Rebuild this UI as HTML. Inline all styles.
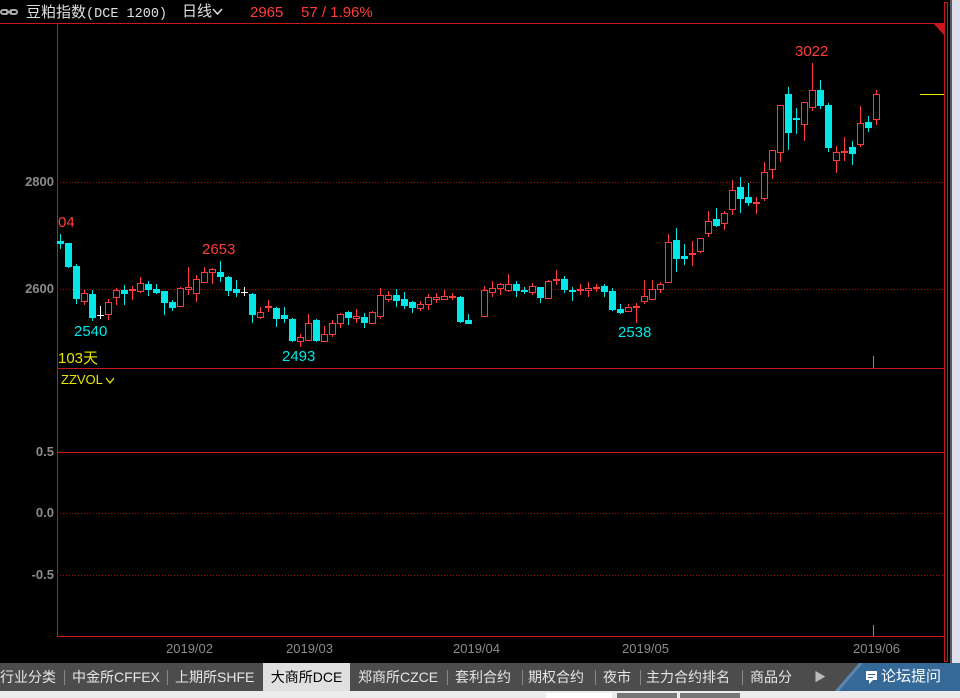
<!DOCTYPE html>
<html><head><meta charset="utf-8"><style>
*{margin:0;padding:0}
body{width:960px;height:698px;background:#000;overflow:hidden;position:relative;font-family:"Liberation Sans","Noto Sans CJK SC",sans-serif}
.t{position:absolute;white-space:nowrap}
.tabs{position:absolute;left:0;top:663px;width:960px;height:28px;background:#4c4c4c}
.tab{position:absolute;top:0;height:28px;line-height:28px;color:#e6e6e6;font-size:14px;font-family:"Liberation Sans","Noto Sans CJK SC",sans-serif}
.sep{position:absolute;top:7px;width:1px;height:15px;background:#888}
</style></head><body>
<svg width="960" height="698" style="position:absolute;left:0;top:0">
<line x1="0" y1="23.5" x2="944" y2="23.5" stroke="#c81818"/>
<line x1="57.5" y1="23" x2="57.5" y2="637" stroke="#c81818"/>
<line x1="57" y1="368.5" x2="944" y2="368.5" stroke="#c81818"/>
<line x1="57" y1="636.5" x2="944" y2="636.5" stroke="#c81818"/>
<line x1="57" y1="182.5" x2="944" y2="182.5" stroke="#a01010" stroke-dasharray="1,2"/>
<line x1="57" y1="289.5" x2="944" y2="289.5" stroke="#a01010" stroke-dasharray="1,2"/>
<line x1="57" y1="452.5" x2="944" y2="452.5" stroke="#c81818"/>
<line x1="57" y1="513.5" x2="944" y2="513.5" stroke="#a01010" stroke-dasharray="1,2"/>
<line x1="57" y1="575.5" x2="944" y2="575.5" stroke="#a01010" stroke-dasharray="1,2"/>
<line x1="873.5" y1="356" x2="873.5" y2="368" stroke="#888"/>
<line x1="873.5" y1="625" x2="873.5" y2="636" stroke="#888"/>
<rect x="944.5" y="2.5" width="3" height="659" fill="none" stroke="#c81818"/>
<polygon points="933,23 944,23 944,35" fill="#c81818"/>
<rect x="950" y="0" width="2" height="663" fill="#5a5a5a"/>
<rect x="952" y="0" width="8" height="663" fill="#dde0ea"/>
<line x1="920" y1="94.5" x2="944" y2="94.5" stroke="#e6e600"/>
<path fill="none" stroke="#ff3c3c" d="M84.5 290V305 M108.5 299V320 M116.5 288V305 M140.5 277V293 M180.5 287V307 M188.5 267V295 M196.5 275V302 M204.5 267V283 M212.5 268V284 M260.5 307V319 M300.5 334V347 M308.5 314V341 M324.5 326V342 M332.5 320V337 M340.5 313V328 M356.5 309V323 M372.5 311V324 M380.5 288V319 M388.5 291V302 M420.5 301V311 M428.5 294V310 M436.5 293V303 M444.5 290V300 M484.5 286V317 M492.5 281V297 M500.5 283V295 M508.5 274V292 M532.5 283V295 M548.5 280V299 M588.5 282V297 M628.5 304V311 M644.5 280V304 M652.5 280V299 M660.5 282V293 M668.5 234V282 M700.5 238V253 M708.5 211V237 M724.5 211V230 M732.5 180V215 M764.5 162V201 M772.5 150V179 M780.5 105V162 M804.5 102V141 M812.5 63V111 M836.5 146V173 M860.5 106V147 M876.5 90V125 M132.5 286V300 M268.5 300V312 M452.5 293V300 M556.5 270V285 M580.5 284V295 M596.5 284V292 M636.5 303V323 M692.5 241V266 M756.5 197V214 M844.5 137V161"/>
<g fill="#000" stroke="#ff3c3c">
<rect x="81.5" y="293.5" width="6" height="8"/><rect x="105.5" y="302.5" width="6" height="12"/><rect x="113.5" y="290.5" width="6" height="7"/><rect x="137.5" y="283.5" width="6" height="8"/><rect x="177.5" y="288.5" width="6" height="18"/><rect x="185.5" y="287.5" width="6" height="2"/><rect x="193.5" y="279.5" width="6" height="14"/><rect x="201.5" y="272.5" width="6" height="10"/><rect x="209.5" y="269.5" width="6" height="3"/><rect x="257.5" y="312.5" width="6" height="5"/><rect x="297.5" y="337.5" width="6" height="4"/><rect x="305.5" y="323.5" width="6" height="17"/><rect x="321.5" y="334.5" width="6" height="7"/><rect x="329.5" y="323.5" width="6" height="11"/><rect x="337.5" y="314.5" width="6" height="9"/><rect x="353.5" y="316.5" width="6" height="2"/><rect x="369.5" y="312.5" width="6" height="11"/><rect x="377.5" y="295.5" width="6" height="21"/><rect x="385.5" y="295.5" width="6" height="4"/><rect x="417.5" y="304.5" width="6" height="4"/><rect x="425.5" y="297.5" width="6" height="7"/><rect x="433.5" y="297.5" width="6" height="2"/><rect x="441.5" y="296.5" width="6" height="3"/><rect x="481.5" y="290.5" width="6" height="26"/><rect x="489.5" y="288.5" width="6" height="4"/><rect x="497.5" y="284.5" width="6" height="4"/><rect x="505.5" y="284.5" width="6" height="6"/><rect x="529.5" y="286.5" width="6" height="6"/><rect x="545.5" y="281.5" width="6" height="17"/><rect x="585.5" y="288.5" width="6" height="2"/><rect x="625.5" y="307.5" width="6" height="4"/><rect x="641.5" y="296.5" width="6" height="5"/><rect x="649.5" y="289.5" width="6" height="10"/><rect x="657.5" y="284.5" width="6" height="5"/><rect x="665.5" y="242.5" width="6" height="40"/><rect x="697.5" y="238.5" width="6" height="13"/><rect x="705.5" y="221.5" width="6" height="12"/><rect x="721.5" y="213.5" width="6" height="10"/><rect x="729.5" y="190.5" width="6" height="19"/><rect x="761.5" y="172.5" width="6" height="26"/><rect x="769.5" y="150.5" width="6" height="19"/><rect x="777.5" y="105.5" width="6" height="47"/><rect x="801.5" y="102.5" width="6" height="22"/><rect x="809.5" y="90.5" width="6" height="17"/><rect x="833.5" y="152.5" width="6" height="8"/><rect x="857.5" y="123.5" width="6" height="21"/><rect x="873.5" y="94.5" width="6" height="25"/>
</g>
<path fill="none" stroke="#ff3c3c" stroke-width="2" d="M129 290H136 M265 307H272 M449 297H456 M553 280H560 M577 290H584 M593 288H600 M633 307H640 M689 254H696 M753 203H760 M841 152H848"/>
<path fill="none" stroke="#00e8e8" d="M60.5 234V249 M68.5 243V268 M76.5 264V304 M92.5 290V321 M124.5 285V305 M148.5 281V296 M156.5 284V294 M164.5 291V315 M172.5 300V311 M220.5 261V282 M228.5 276V296 M236.5 280V297 M252.5 293V323 M276.5 307V327 M284.5 307V323 M292.5 318V342 M316.5 319V342 M348.5 311V325 M364.5 313V328 M396.5 289V307 M404.5 292V309 M412.5 301V313 M460.5 296V323 M468.5 314V324 M516.5 281V297 M524.5 287V294 M540.5 287V303 M564.5 276V293 M604.5 284V297 M612.5 288V311 M620.5 304V314 M676.5 228V272 M684.5 244V265 M716.5 208V227 M740.5 177V213 M748.5 183V206 M788.5 87V150 M820.5 80V109 M828.5 103V152 M852.5 141V165 M868.5 116V132 M572.5 287V301 M796.5 108V134"/>
<g fill="#00e8e8">
<rect x="57" y="241" width="7" height="3"/><rect x="65" y="243" width="7" height="24"/><rect x="73" y="266" width="7" height="33"/><rect x="89" y="294" width="7" height="24"/><rect x="121" y="290" width="7" height="4"/><rect x="145" y="284" width="7" height="6"/><rect x="153" y="289" width="7" height="4"/><rect x="161" y="291" width="7" height="12"/><rect x="169" y="302" width="7" height="6"/><rect x="217" y="272" width="7" height="5"/><rect x="225" y="277" width="7" height="14"/><rect x="233" y="289" width="7" height="4"/><rect x="249" y="294" width="7" height="21"/><rect x="273" y="308" width="7" height="11"/><rect x="281" y="315" width="7" height="4"/><rect x="289" y="319" width="7" height="22"/><rect x="313" y="320" width="7" height="21"/><rect x="345" y="312" width="7" height="6"/><rect x="361" y="317" width="7" height="6"/><rect x="393" y="295" width="7" height="6"/><rect x="401" y="299" width="7" height="7"/><rect x="409" y="302" width="7" height="6"/><rect x="457" y="297" width="7" height="25"/><rect x="465" y="320" width="7" height="4"/><rect x="513" y="284" width="7" height="7"/><rect x="521" y="290" width="7" height="2"/><rect x="537" y="287" width="7" height="11"/><rect x="561" y="279" width="7" height="11"/><rect x="601" y="286" width="7" height="6"/><rect x="609" y="291" width="7" height="19"/><rect x="617" y="309" width="7" height="4"/><rect x="673" y="240" width="7" height="19"/><rect x="681" y="256" width="7" height="3"/><rect x="713" y="219" width="7" height="7"/><rect x="737" y="187" width="7" height="12"/><rect x="745" y="197" width="7" height="6"/><rect x="785" y="94" width="7" height="39"/><rect x="817" y="90" width="7" height="16"/><rect x="825" y="105" width="7" height="43"/><rect x="849" y="147" width="7" height="7"/><rect x="865" y="122" width="7" height="6"/>
</g>
<path fill="none" stroke="#00e8e8" stroke-width="2" d="M569 291H576 M793 119H800"/>
<path fill="none" stroke="#fff" d="M100.5 306V319 M97 315.5H104 M244.5 287V296 M241 292.5H248"/>
<g fill="none" stroke="#aaa" stroke-width="2"><rect x="1" y="10" width="7" height="4" rx="2"/><rect x="10" y="10" width="7" height="4" rx="2"/></g>
<line x1="6" y1="12" x2="12" y2="12" stroke="#aaa" stroke-width="2"/>
<polyline points="213,9 217.5,14 222,9" fill="none" stroke="#ddd" stroke-width="1.5"/>
<polyline points="106,378 110,383 114,378" fill="none" stroke="#e6e600" stroke-width="1.3"/>
</svg>
<div class="t" style="left:26px;top:3px;font-size:15px;color:#e0e0e0;font-family:'Noto Sans CJK SC',sans-serif;line-height:18px">豆粕指数<span style="font-family:'Liberation Mono',monospace;font-size:13.5px">(DCE 1200)</span></div>
<div class="t" style="left:182px;top:3px;font-size:15px;color:#e0e0e0;line-height:18px">日线</div>
<div class="t" style="left:250px;top:4px;font-size:15px;color:#ff3c3c;line-height:18px">2965</div>
<div class="t" style="left:301px;top:4px;font-size:15px;color:#ff3c3c;line-height:18px">57 / 1.96%</div>
<div class="t" style="left:0;top:174px;width:54px;text-align:right;font-size:13px;font-weight:bold;color:#8c8c8c">2800</div>
<div class="t" style="left:0;top:281px;width:54px;text-align:right;font-size:13px;font-weight:bold;color:#8c8c8c">2600</div>
<div class="t" style="left:0;top:444px;width:54px;text-align:right;font-size:13px;font-weight:bold;color:#8c8c8c">0.5</div>
<div class="t" style="left:0;top:505px;width:54px;text-align:right;font-size:13px;font-weight:bold;color:#8c8c8c">0.0</div>
<div class="t" style="left:0;top:567px;width:54px;text-align:right;font-size:13px;font-weight:bold;color:#8c8c8c">-0.5</div>
<div class="t" style="left:58px;top:214px;font-size:15px;color:#ff3c3c">04</div>
<div class="t" style="left:202px;top:241px;font-size:15px;color:#ff3c3c">2653</div>
<div class="t" style="left:795px;top:43px;font-size:15px;color:#ff3c3c">3022</div>
<div class="t" style="left:74px;top:323px;font-size:15px;color:#00e8e8">2540</div>
<div class="t" style="left:282px;top:348px;font-size:15px;color:#00e8e8">2493</div>
<div class="t" style="left:618px;top:324px;font-size:15px;color:#00e8e8">2538</div>
<div class="t" style="left:58px;top:347px;font-size:15px;color:#e6e600">103天</div>
<div class="t" style="left:61px;top:372px;font-size:13px;color:#e6e600">ZZVOL</div>
<div class="t" style="left:166px;top:641px;font-size:13px;color:#8c8c8c">2019/02</div>
<div class="t" style="left:286px;top:641px;font-size:13px;color:#8c8c8c">2019/03</div>
<div class="t" style="left:453px;top:641px;font-size:13px;color:#8c8c8c">2019/04</div>
<div class="t" style="left:622px;top:641px;font-size:13px;color:#8c8c8c">2019/05</div>
<div class="t" style="left:853px;top:641px;font-size:13px;color:#8c8c8c">2019/06</div>
<div class="tabs">
<div class="tab" style="left:0">行业分类</div><div class="sep" style="left:64px"></div>
<div class="tab" style="left:72px">中金所CFFEX</div><div class="sep" style="left:167px"></div>
<div class="tab" style="left:175px">上期所SHFE</div>
<div class="tab" style="left:263px;width:87px;background:#e0e0e0;color:#000;text-align:center">大商所DCE</div>
<div class="tab" style="left:358px">郑商所CZCE</div><div class="sep" style="left:447px"></div>
<div class="tab" style="left:455px">套利合约</div><div class="sep" style="left:522px"></div>
<div class="tab" style="left:528px">期权合约</div><div class="sep" style="left:595px"></div>
<div class="tab" style="left:603px">夜市</div><div class="sep" style="left:640px"></div>
<div class="tab" style="left:646px">主力合约排名</div><div class="sep" style="left:742px"></div>
<div class="tab" style="left:750px;width:55px;overflow:hidden">商品分类</div>
<div class="tab" style="left:814px;color:#bbb;font-size:12px">▶</div>
<svg width="125" height="28" style="position:absolute;left:835px;top:0"><polygon points="28,0 125,0 125,28 0,28" fill="#356a98"/><polygon points="24,0 28,0 4,28 0,28" fill="#5b86ad"/><rect x="31" y="8" width="11" height="9" fill="#fff"/><polygon points="34,17 38,17 34,21" fill="#fff"/><line x1="33" y1="11.5" x2="40" y2="11.5" stroke="#356a98"/><line x1="33" y1="14.5" x2="38" y2="14.5" stroke="#356a98"/></svg>
<div class="tab" style="left:881px;color:#fff;font-size:15px">论坛提问</div>
</div>
<div style="position:absolute;left:0;top:691px;width:960px;height:7px;background:#ececec"></div>
<div style="position:absolute;left:546px;top:693px;width:66px;height:5px;background:#fff"></div>
<div style="position:absolute;left:617px;top:693px;width:60px;height:5px;background:#777"></div>
<div style="position:absolute;left:680px;top:693px;width:60px;height:5px;background:#777"></div>
</body></html>
